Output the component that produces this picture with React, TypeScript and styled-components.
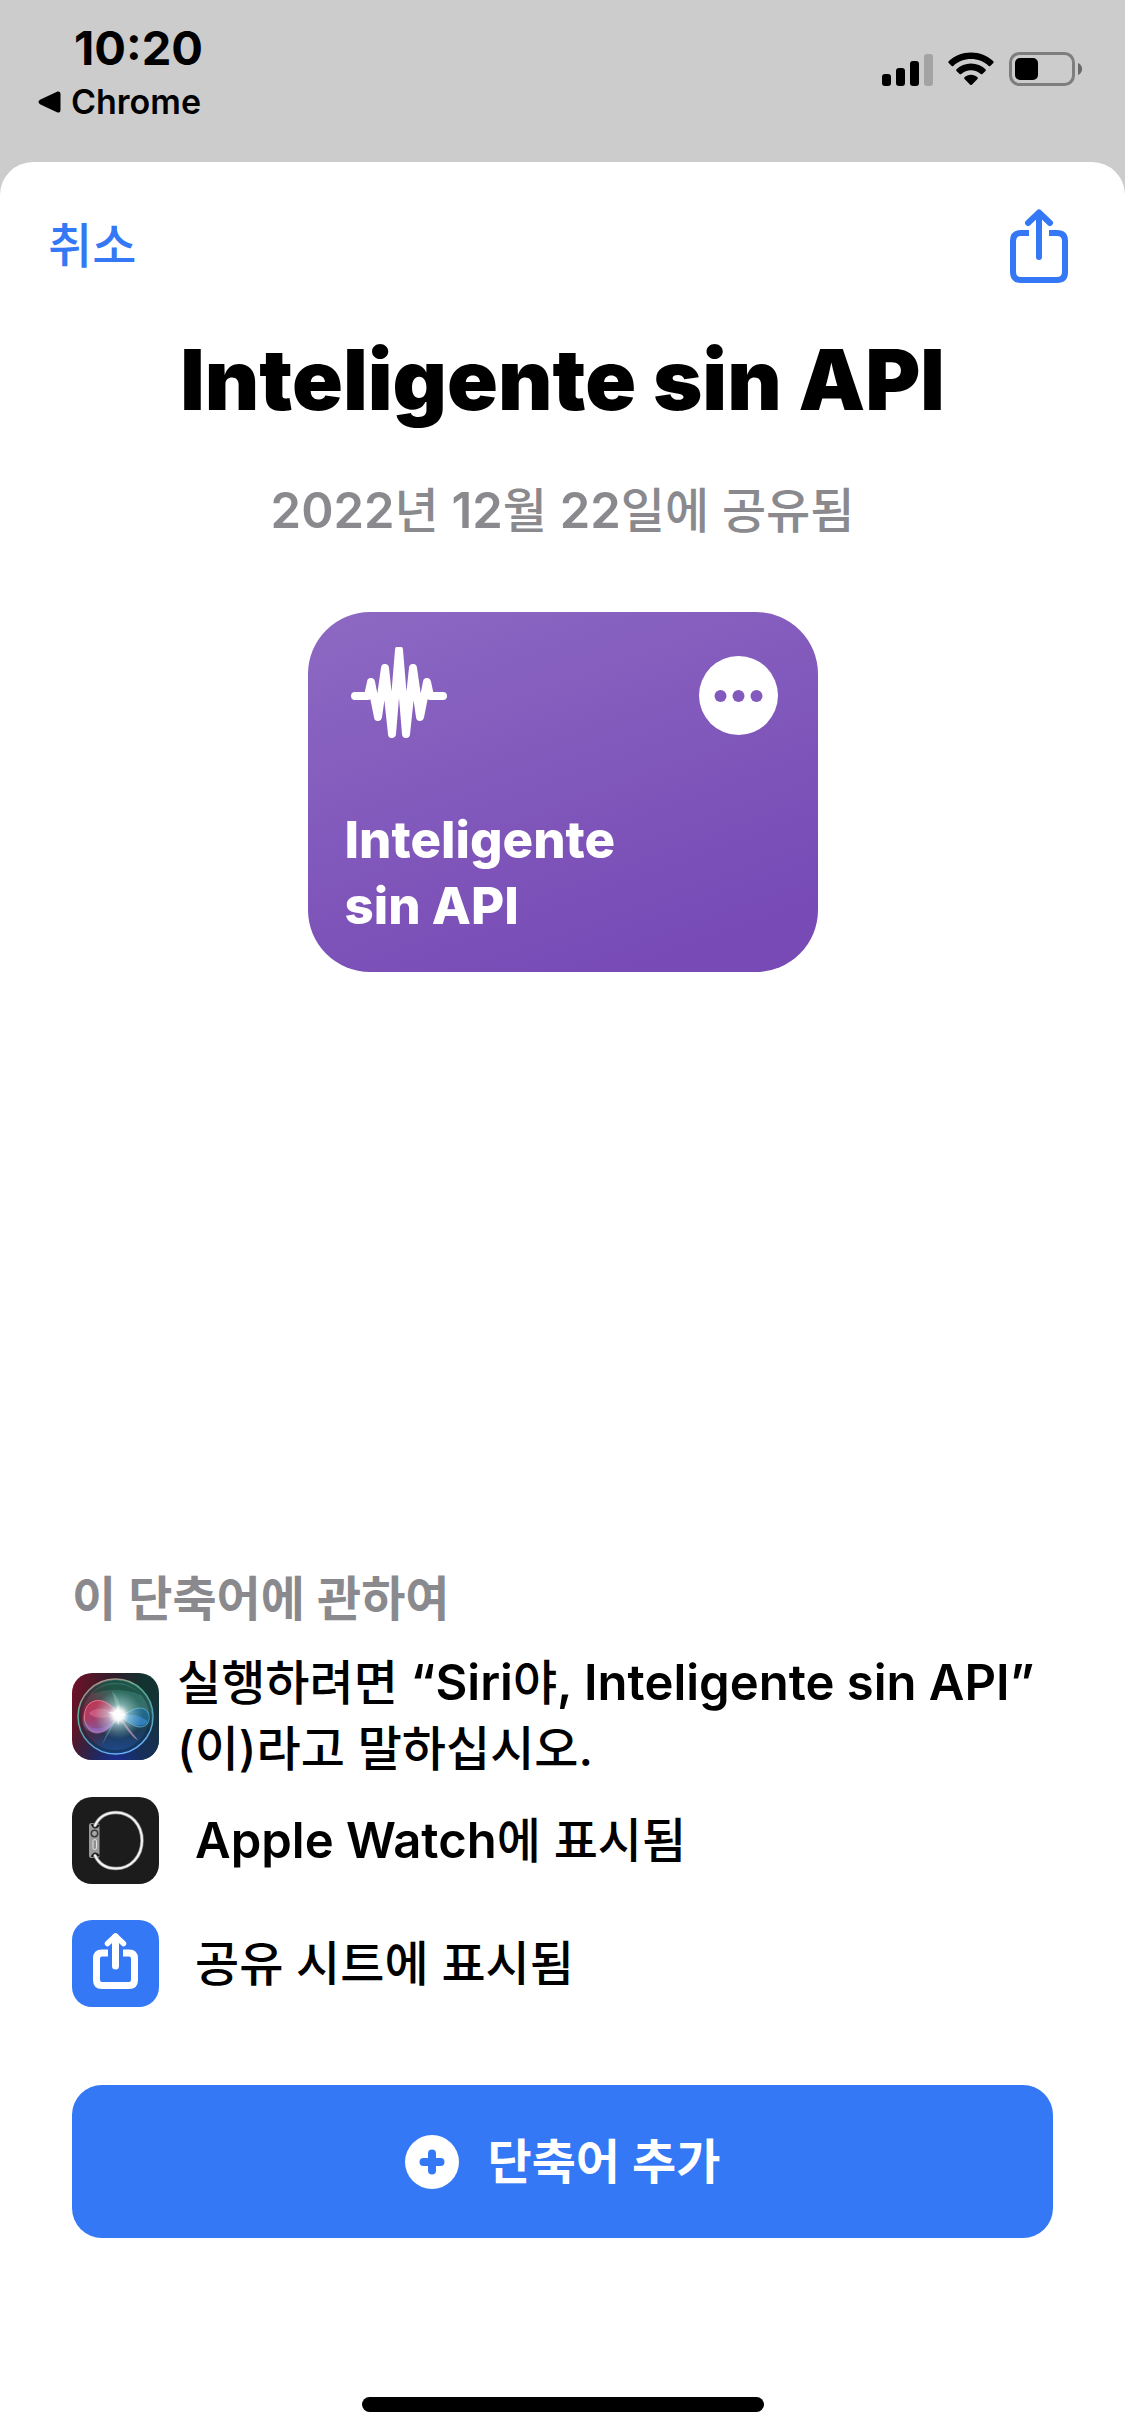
import React from "react";
import styled, { createGlobalStyle } from "styled-components";

const blue = "#3478f6";
const grey = "#8a8a8e";

const GlobalStyle = createGlobalStyle`
  *, *::before, *::after { box-sizing: border-box; }
  body {
    margin: 0;
    background: #cccccc;
    color: #000;
    font-family: Inter, "Noto Sans CJK KR", sans-serif;
  }
  h1, h2, p, ul { margin: 0; padding: 0; }
  button {
    margin: 0;
    padding: 0;
    border: 0;
    background: none;
    color: inherit;
    font: inherit;
    cursor: pointer;
  }
  svg { display: block; flex: none; }
`;

const Screen = styled.div`
  display: flex;
  flex-direction: column;
  min-height: 100vh;
`;

const StatusBar = styled.header`
  display: flex;
  justify-content: space-between;
  height: 162px;
  padding: 24px 42px 0 38px;
`;

const Clock = styled.div`
  padding-left: 36px;
  font-size: 47px;
  font-weight: 700;
  line-height: 48px;
`;

const BackToApp = styled.button`
  display: flex;
  align-items: center;
  gap: 10px;
  margin-top: 9px;
  font-size: 34px;
  font-weight: 600;
  line-height: 42px;
`;

const Indicators = styled.div`
  display: flex;
  align-items: center;
  gap: 15px;
  height: 90px;
`;

const Sheet = styled.main`
  display: flex;
  flex: 1;
  flex-direction: column;
  border-radius: 33px 33px 0 0;
  background: #fff;
`;

const NavBar = styled.nav`
  display: flex;
  align-items: center;
  justify-content: space-between;
  padding: 46px 48px 0;
`;

const NavButton = styled.button`
  color: ${blue};
  font-size: 48px;
  font-weight: 500;
  line-height: 66px;
`;

const Intro = styled.section`
  display: flex;
  flex-direction: column;
  align-items: center;
  padding: 48px 48px 0;
  text-align: center;
`;

const Title = styled.h1`
  font-size: 84px;
  font-weight: 900;
  line-height: 96px;
`;

const Latin = styled.span`
  font-size: 49px;
  font-weight: 600;
`;

const SharedOn = styled.p`
  margin: 50px 0 68px;
  color: ${grey};
  font-size: 48px;
  font-weight: 500;
  line-height: 66px;
`;

const ShortcutCard = styled.article`
  display: flex;
  flex-direction: column;
  justify-content: space-between;
  width: 510px;
  height: 360px;
  padding: 35px 40px 33px 37px;
  border-radius: 62px;
  background: linear-gradient(160deg, #8d69c3 0%, #7f55ba 55%, #774ab5 88%);
  color: #fff;
  text-align: left;
`;

const CardTop = styled.div`
  display: flex;
  align-items: center;
  justify-content: space-between;
`;

const CardName = styled.h2`
  width: 320px;
  font-size: 51px;
  font-weight: 800;
  line-height: 66px;
`;

const About = styled.section`
  margin-top: auto;
  padding: 60px 72px 0;
`;

const AboutHeading = styled.h2`
  margin-bottom: 18px;
  color: ${grey};
  font-size: 48px;
  font-weight: 600;
  line-height: 66px;
`;

const FeatureList = styled.ul`
  display: flex;
  flex-direction: column;
  gap: 15px;
  list-style: none;
`;

const Feature = styled.li<{ $wide?: boolean }>`
  display: flex;
  align-items: center;
  gap: ${(p) => (p.$wide ? 36 : 18)}px;
  padding-bottom: ${(p) => (p.$wide ? 21 : 0)}px;
  font-size: 48px;
  font-weight: 500;
  line-height: 66px;
`;

const AddButton = styled.button`
  display: flex;
  align-items: center;
  justify-content: center;
  gap: 29px;
  width: 100%;
  height: 153px;
  margin-top: 57px;
  border-radius: 30px;
  background: ${blue};
  color: #fff;
  font-size: 48px;
  font-weight: 600;
  line-height: 66px;
`;

const HomeIndicator = styled.div`
  width: 402px;
  height: 15px;
  margin: 159px auto 24px;
  border-radius: 8px;
  background: #000;
`;

const Signal = () => (
  <svg width="51" height="33" viewBox="0 0 51 33" aria-hidden="true">
    <rect x="0" y="21" width="9" height="12" rx="3" />
    <rect x="14" y="15" width="9" height="18" rx="3" />
    <rect x="28" y="8" width="9" height="25" rx="3" />
    <rect x="42" y="1" width="9" height="32" rx="3" fill="#a3a3a3" />
  </svg>
);

const Wifi = () => (
  <svg width="46" height="34" viewBox="0 0 46 34" aria-hidden="true">
    <path d="M23 0.5C31.600 0.500 39.400 3.800 45.300 9.200Q46.100 10 45.300 10.900L42.300 13.900Q41.500 14.600 40.700 13.900C36 9.600 29.800 7.100 23 7.100S10 9.600 5.300 13.900Q4.500 14.600 3.700 13.900L0.700 10.900Q-0.100 10 0.700 9.200C6.600 3.800 14.400 0.500 23 0.500Z" />
    <path d="M23 11.500C28.600 11.500 33.700 13.600 37.500 17.200Q38.300 18 37.500 18.900L34.400 21.900Q33.600 22.600 32.800 21.900C30.200 19.600 26.800 18.200 23 18.200S15.800 19.600 13.200 21.900Q12.400 22.600 11.600 21.900L8.500 18.900Q7.700 18 8.500 17.200C12.300 13.600 17.400 11.500 23 11.500Z" />
    <path d="M23 22.800C25.500 22.800 27.800 23.700 29.500 25.200Q30.300 26 29.500 26.900L23.800 32.700Q23 33.500 22.200 32.700L16.500 26.900Q15.700 26 16.500 25.200C18.200 23.700 20.500 22.800 23 22.800Z" />
  </svg>
);

const Battery = () => (
  <svg width="74" height="34" viewBox="0 0 74 34" aria-hidden="true">
    <rect x="1.500" y="1.500" width="63" height="31" rx="9" fill="none" stroke="#7e7e7e" strokeWidth="3" />
    <rect x="6" y="6" width="23" height="22" rx="5" />
    <path d="M69 11C74.500 13 74.500 21 69 23Z" fill="#6a6a6a" />
  </svg>
);

const ShareGlyph = () => (
  <svg width="76" height="76" viewBox="0 0 76 76" fill="none" stroke="currentColor" strokeWidth="6" aria-hidden="true">
    <path d="M28 25H20Q12 25 12 33V64Q12 72 20 72H56Q64 72 64 64V33Q64 25 56 25H48" />
    <path d="M38 49V5M27 15L38 4.500L49 15" strokeLinecap="round" strokeLinejoin="round" />
  </svg>
);

const WaveGlyph = () => (
  <svg width="106" height="96" viewBox="-6 1 106 96" fill="none" stroke="currentColor" strokeWidth="8" strokeLinecap="round" strokeLinejoin="round" aria-hidden="true">
    <path d="M4 50H17L20 36L27 71L34 22L41 88L48 4L55 88L62 22L69 71L76 36L79 50H92" />
  </svg>
);

const MoreGlyph = () => (
  <svg width="79" height="79" viewBox="0 0 79 79" aria-hidden="true">
    <circle cx="39.500" cy="39.500" r="39.500" fill="#fff" />
    <g fill="#8259bc">
      <circle cx="21.500" cy="40" r="6" />
      <circle cx="39.500" cy="40" r="6" />
      <circle cx="57.500" cy="40" r="6" />
    </g>
  </svg>
);

const SiriIcon = () => (
  <svg width="87" height="87" viewBox="0 0 87 87" aria-hidden="true">
    <defs>
      <clipPath id="siriTile"><rect width="87" height="87" rx="20" /></clipPath>
      <clipPath id="siriOrb"><circle cx="43.500" cy="43.500" r="37" /></clipPath>
      <linearGradient id="siriBase" x1="0" y1="0.300" x2="1" y2="0.500">
        <stop offset="0" stopColor="#6a1228" />
        <stop offset="0.450" stopColor="#2b1f2c" />
        <stop offset="0.750" stopColor="#12332f" />
        <stop offset="1" stopColor="#153338" />
      </linearGradient>
      <radialGradient id="siriDeep" cx="0.500" cy="1.050" r="0.600">
        <stop offset="0" stopColor="#1b2c9c" />
        <stop offset="1" stopColor="#17305a" stopOpacity="0" />
      </radialGradient>
      <radialGradient id="siriEast" cx="1" cy="0.900" r="0.600">
        <stop offset="0" stopColor="#17304f" />
        <stop offset="1" stopColor="#17304f" stopOpacity="0" />
      </radialGradient>
      <linearGradient id="siriInside" x1="0.450" y1="0" x2="0.500" y2="1">
        <stop offset="0" stopColor="#2c7a60" />
        <stop offset="0.450" stopColor="#3f7a78" />
        <stop offset="0.700" stopColor="#1c3f5c" />
        <stop offset="1" stopColor="#1f4f97" />
      </linearGradient>
      <linearGradient id="siriRim" x1="0.200" y1="0" x2="0.600" y2="1">
        <stop offset="0" stopColor="#c08a88" />
        <stop offset="0.300" stopColor="#5db08e" />
        <stop offset="0.700" stopColor="#4f9fc0" />
        <stop offset="1" stopColor="#6db4ff" />
      </linearGradient>
      <linearGradient id="siriPink" x1="0" y1="0" x2="0.300" y2="1">
        <stop offset="0" stopColor="#d8304f" />
        <stop offset="0.600" stopColor="#b03a68" />
        <stop offset="1" stopColor="#8f5aa8" />
      </linearGradient>
      <radialGradient id="siriWest" cx="0" cy="0.450" r="0.550">
        <stop offset="0" stopColor="#7c1230" />
        <stop offset="1" stopColor="#7c1230" stopOpacity="0" />
      </radialGradient>
      <radialGradient id="siriFlare" cx="46.500" cy="42" r="24" gradientUnits="userSpaceOnUse">
        <stop offset="0" stopColor="#fff" />
        <stop offset="0.220" stopColor="#fff" stopOpacity="0.950" />
        <stop offset="0.450" stopColor="#dff" stopOpacity="0.450" />
        <stop offset="1" stopColor="#9fe0dc" stopOpacity="0" />
      </radialGradient>
    </defs>
    <g clipPath="url(#siriTile)">
      <rect width="87" height="87" fill="url(#siriBase)" />
      <rect width="87" height="87" fill="url(#siriEast)" />
      <rect width="87" height="87" fill="url(#siriDeep)" />
      <g clipPath="url(#siriOrb)">
        <circle cx="43.500" cy="43.500" r="38" fill="url(#siriInside)" opacity="0.850" />
        <rect width="87" height="87" fill="url(#siriWest)" />
        <path d="M20 21C32 8 57 8 69 22C56 16 34 15 20 21Z" fill="#0d3b30" opacity="0.500" />
        <path d="M46 42C38 59 24 65 14 56C8 50 10 38 20 31C32 25 41 33 46 42Z" fill="#5fb0c4" opacity="0.350" />
        <path d="M46 41C40 55 30 62 20 58C11 54 10 38 17 31C27 23 39 30 46 41Z" fill="url(#siriPink)" fillOpacity="0.850" stroke="#e8788e" strokeWidth="1" />
        <path d="M17 40C26 32 38 36 46 42C36 45 22 47 17 40Z" fill="#ff8fb0" opacity="0.350" />
        <path d="M13 46C16 60 35 58 46 43C36 66 14 66 13 46Z" fill="#9a76d0" opacity="0.500" />
        <path d="M47 42C55 42 60 35 68 35C77 35 80 45 75 51C67 59 56 49 47 42Z" fill="#1f6a94" opacity="0.800" stroke="#62b8da" strokeWidth="1" />
        <path d="M50 43C60 40 70 43 76 49C67 57 57 50 50 43Z" fill="#3d8fdc" opacity="0.600" />
        <path d="M46 42L66 67Q59 65 46 42Z" fill="#d99ac0" opacity="0.650" />
        <path d="M46 44L30 72Q36 55 46 44Z" fill="#6fc3e8" opacity="0.400" />
        <path d="M46 40L40 18Q49 26 48 40Z" fill="#b8ffe0" opacity="0.250" />
        <circle cx="46.500" cy="42" r="24" fill="url(#siriFlare)" />
        <path d="M46.500 32L48 40L55 42L48 44L46.500 52L44 44L36 39L44 39Z" fill="#fff" opacity="0.600" />
      </g>
      <circle cx="43.500" cy="43.500" r="35" fill="none" stroke="#05202a" strokeWidth="2.500" opacity="0.350" />
      <circle cx="43.500" cy="43.500" r="37.500" fill="none" stroke="url(#siriRim)" strokeWidth="1.500" />
    </g>
  </svg>
);

const WatchIcon = () => (
  <svg width="87" height="87" viewBox="0 0 87 87" aria-hidden="true">
    <rect width="87" height="87" rx="20" fill="#1c1c1c" />
    <rect x="17" y="26" width="10.500" height="35" rx="2.500" fill="#9b9b9b" />
    <path d="M20 27Q22.500 33 27 28M20 60Q22.500 54 27 59" fill="none" stroke="#1c1c1c" strokeWidth="2.500" />
    <path d="M23 28.500C27 20 35 15.500 44 15.500C59 15.500 70 28 70 43.500S59 71.500 44 71.500C35 71.500 27 67 23 58.500" fill="none" stroke="#8c8c8c" strokeWidth="3.500" strokeLinecap="round" />
    <path d="M23 28.500C27 20 35 15.500 44 15.500C59 15.500 70 28 70 43.500S59 71.500 44 71.500C35 71.500 27 67 23 58.500" fill="none" stroke="#f4f4f4" strokeWidth="2" strokeLinecap="round" />
    <circle cx="22.500" cy="36.500" r="3.200" fill="#a8a8a8" stroke="#3c3c3c" strokeWidth="1.500" />
    <rect x="21" y="42.500" width="3.500" height="10" rx="1.750" fill="#8f8f8f" stroke="#e2e2e2" strokeWidth="1" />
  </svg>
);

const ShareSheetIcon = () => (
  <svg width="87" height="87" viewBox="0 0 87 87" fill="none" stroke="#fff" strokeWidth="7" aria-hidden="true">
    <rect width="87" height="87" rx="20" fill={blue} stroke="none" />
    <path d="M36 33H30Q24.500 33 24.500 38.500V60Q24.500 65.500 30 65.500H57Q62.500 65.500 62.500 60V38.500Q62.500 33 57 33H51" />
    <path d="M43.500 46V17" strokeLinecap="round" />
    <path d="M35.500 23.500L43.500 16L51.500 23.500" strokeWidth="5.500" strokeLinecap="round" strokeLinejoin="round" />
  </svg>
);

const PlusGlyph = () => (
  <svg width="54" height="54" viewBox="0 0 54 54" aria-hidden="true">
    <circle cx="27" cy="27" r="27" fill="#fff" />
    <path d="M27 18.500V35.500M18.500 27H35.500" stroke={blue} strokeWidth="8" strokeLinecap="round" />
  </svg>
);

export default function App() {
  return (
    <Screen>
      <GlobalStyle />
      <StatusBar>
        <div>
          <Clock>10:20</Clock>
          <BackToApp type="button">
            <svg width="23" height="22" viewBox="0 0 23 22" aria-hidden="true">
              <path d="M19.500 0.600Q22.500 -0.300 22.500 3V19Q22.500 22.300 19.500 21.400L2 13.200Q-1 11 2 8.800Z" />
            </svg>
            Chrome
          </BackToApp>
        </div>
        <Indicators>
          <Signal />
          <Wifi />
          <Battery />
        </Indicators>
      </StatusBar>

      <Sheet>
        <NavBar>
          <NavButton type="button">취소</NavButton>
          <NavButton type="button" aria-label="공유">
            <ShareGlyph />
          </NavButton>
        </NavBar>

        <Intro>
          <Title>Inteligente sin API</Title>
          <SharedOn>
            <Latin>2022</Latin>년 <Latin>12</Latin>월 <Latin>22</Latin>일에 공유됨
          </SharedOn>
          <ShortcutCard>
            <CardTop>
              <WaveGlyph />
              <button type="button" aria-label="더 보기">
                <MoreGlyph />
              </button>
            </CardTop>
            <CardName>Inteligente sin API</CardName>
          </ShortcutCard>
        </Intro>

        <About>
          <AboutHeading>이 단축어에 관하여</AboutHeading>
          <FeatureList>
            <Feature>
              <SiriIcon />
              <p>
                실행하려면 <Latin>“Siri</Latin>야<Latin>, Inteligente sin API”</Latin>
                <br />
                (이)라고 말하십시오.
              </p>
            </Feature>
            <Feature $wide>
              <WatchIcon />
              <p>
                <Latin>Apple Watch</Latin>에 표시됨
              </p>
            </Feature>
            <Feature $wide>
              <ShareSheetIcon />
              <p>공유 시트에 표시됨</p>
            </Feature>
          </FeatureList>
          <AddButton type="button">
            <PlusGlyph />
            단축어 추가
          </AddButton>
        </About>
        <HomeIndicator />
      </Sheet>
    </Screen>
  );
}
